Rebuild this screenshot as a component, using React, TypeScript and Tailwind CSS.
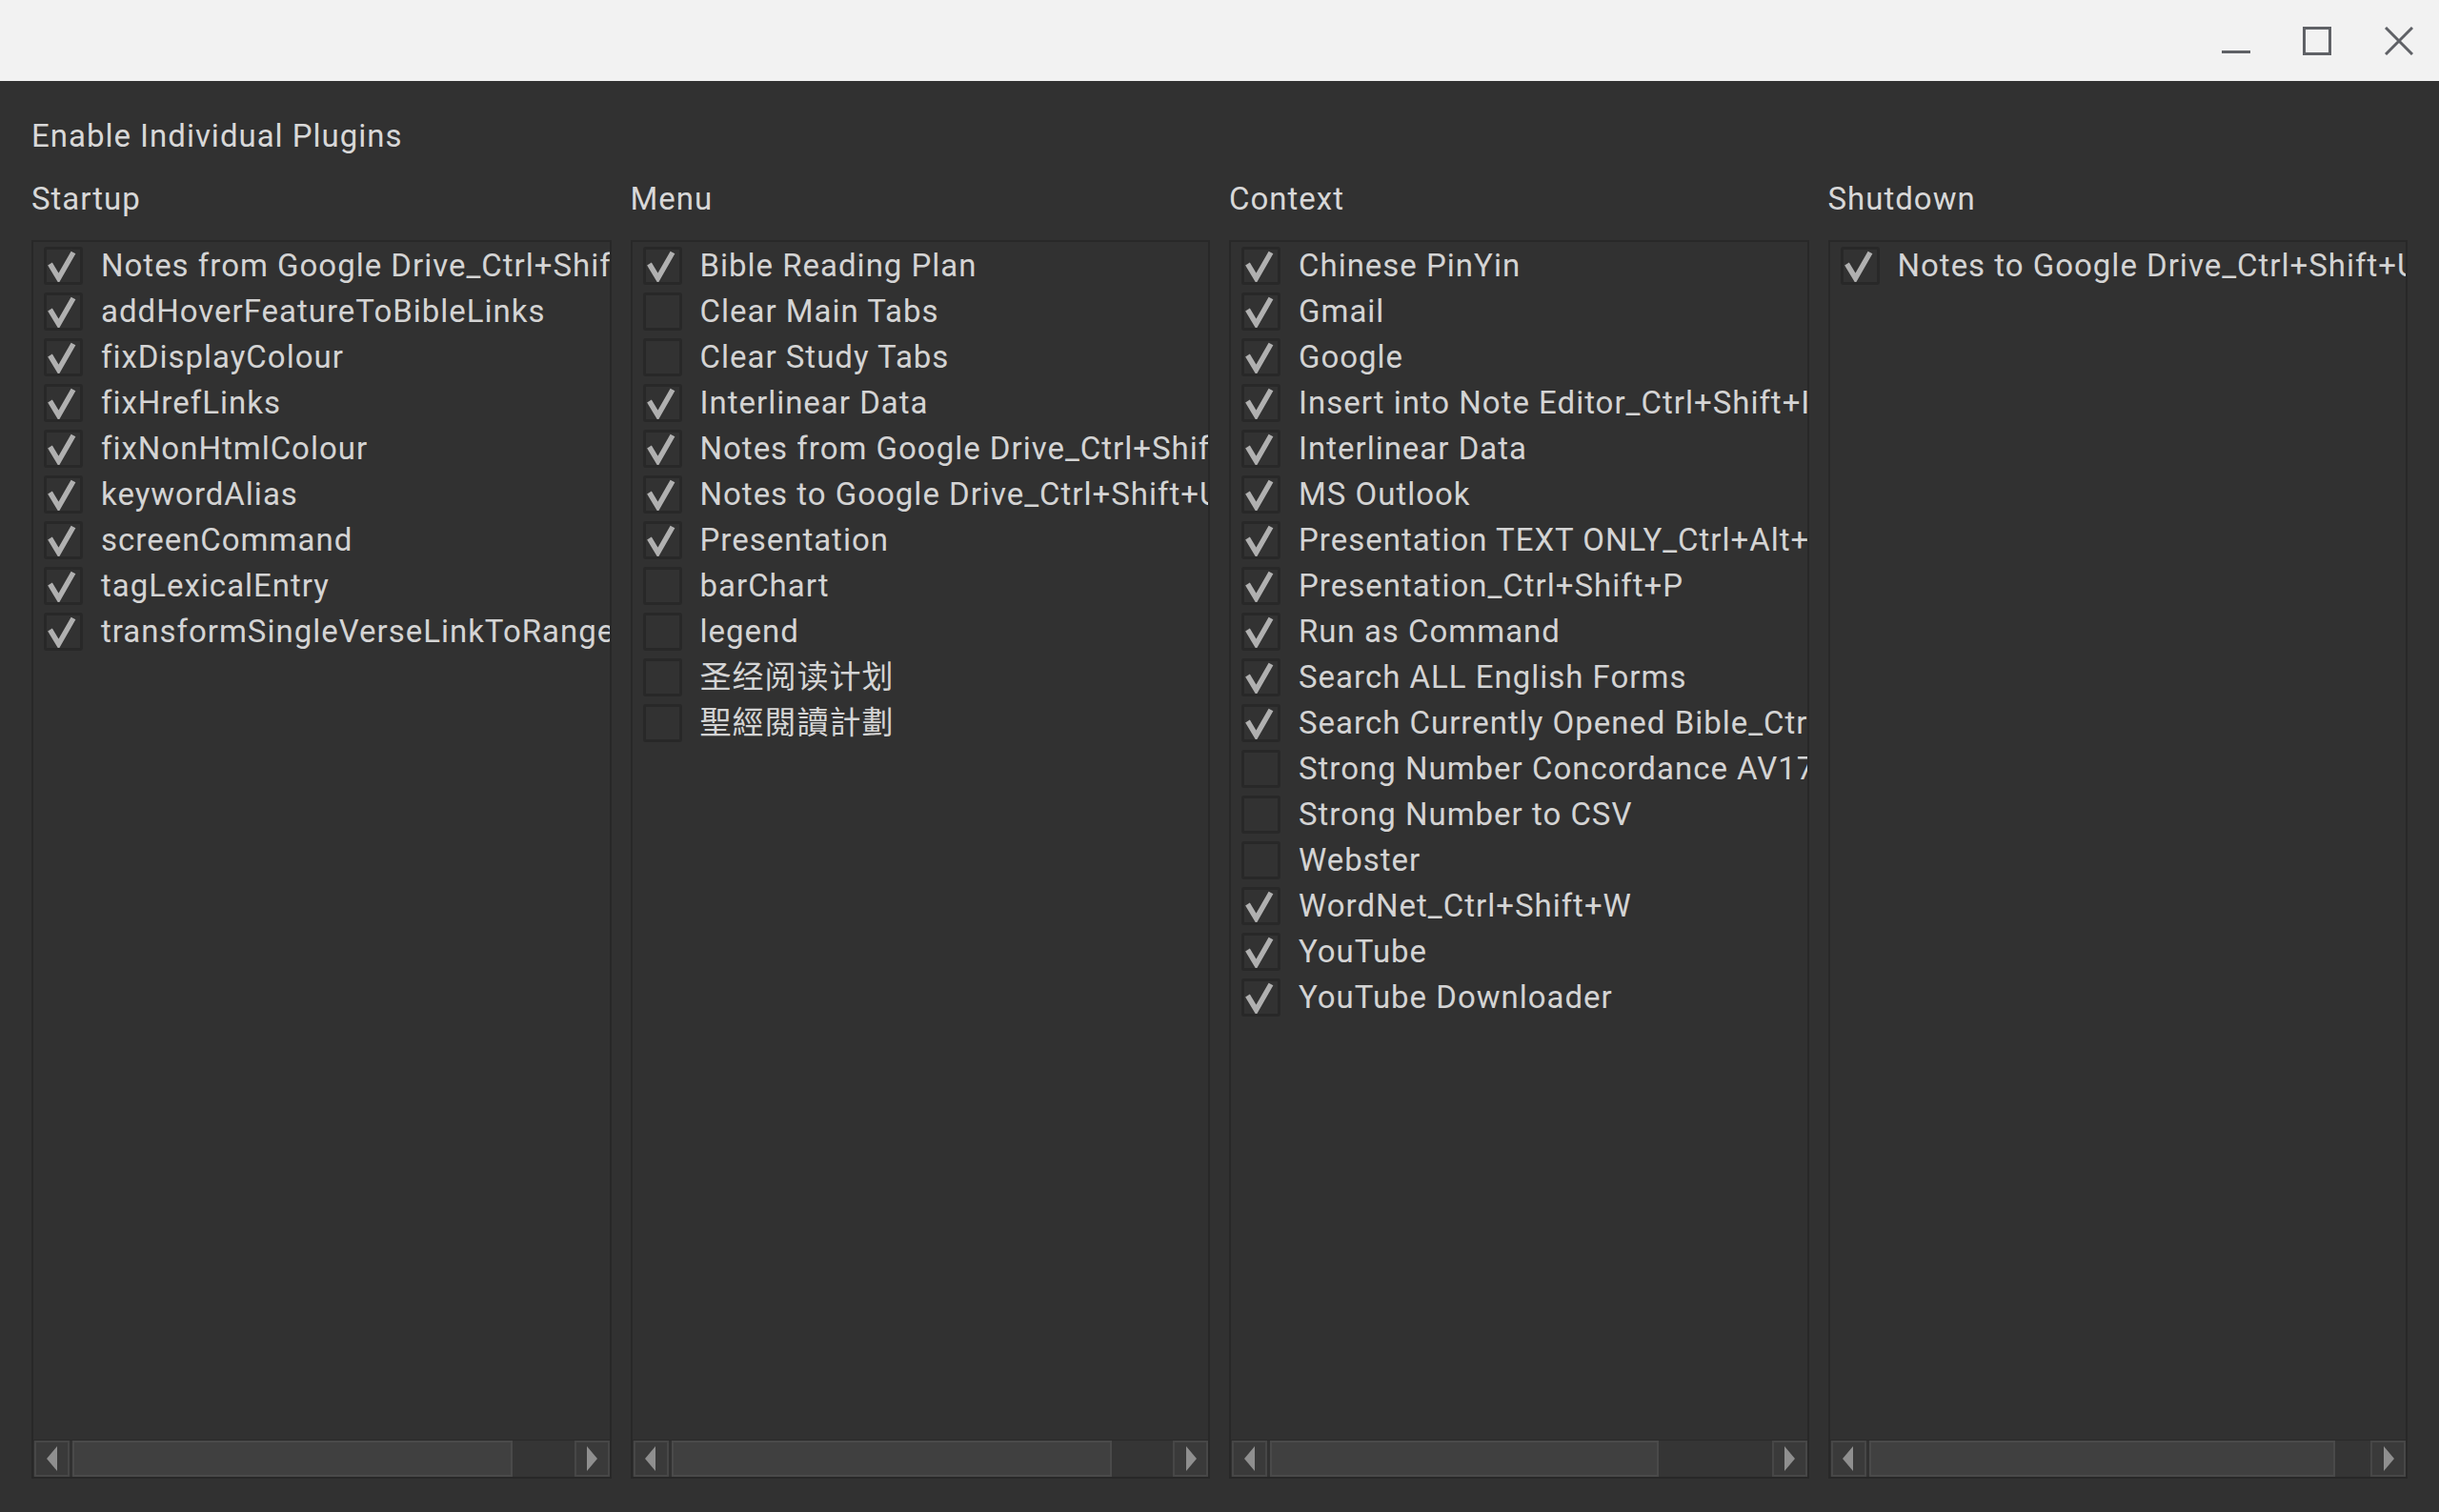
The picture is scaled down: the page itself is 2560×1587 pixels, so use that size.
import React from "react";

type Item = { label: string; on: boolean };

const STARTUP: Item[] = [
  { label: "Notes from Google Drive_Ctrl+Shift+O", on: true },
  { label: "addHoverFeatureToBibleLinks", on: true },
  { label: "fixDisplayColour", on: true },
  { label: "fixHrefLinks", on: true },
  { label: "fixNonHtmlColour", on: true },
  { label: "keywordAlias", on: true },
  { label: "screenCommand", on: true },
  { label: "tagLexicalEntry", on: true },
  { label: "transformSingleVerseLinkToRange", on: true },
];

const MENU: Item[] = [
  { label: "Bible Reading Plan", on: true },
  { label: "Clear Main Tabs", on: false },
  { label: "Clear Study Tabs", on: false },
  { label: "Interlinear Data", on: true },
  { label: "Notes from Google Drive_Ctrl+Shift+O", on: true },
  { label: "Notes to Google Drive_Ctrl+Shift+U", on: true },
  { label: "Presentation", on: true },
  { label: "barChart", on: false },
  { label: "legend", on: false },
  { label: "圣经阅读计划", on: false },
  { label: "聖經閱讀計劃", on: false },
];

const CONTEXT: Item[] = [
  { label: "Chinese PinYin", on: true },
  { label: "Gmail", on: true },
  { label: "Google", on: true },
  { label: "Insert into Note Editor_Ctrl+Shift+I", on: true },
  { label: "Interlinear Data", on: true },
  { label: "MS Outlook", on: true },
  { label: "Presentation TEXT ONLY_Ctrl+Alt+P", on: true },
  { label: "Presentation_Ctrl+Shift+P", on: true },
  { label: "Run as Command", on: true },
  { label: "Search ALL English Forms", on: true },
  { label: "Search Currently Opened Bible_Ctrl+Shift+S", on: true },
  { label: "Strong Number Concordance AV1769", on: false },
  { label: "Strong Number to CSV", on: false },
  { label: "Webster", on: false },
  { label: "WordNet_Ctrl+Shift+W", on: true },
  { label: "YouTube", on: true },
  { label: "YouTube Downloader", on: true },
];

const SHUTDOWN: Item[] = [{ label: "Notes to Google Drive_Ctrl+Shift+U", on: true }];

function Check({ on }: { on: boolean }) {
  return (
    <div className="h-[40px] w-[41px] shrink-0 rounded-[3px] border-[3px] border-[#282828] bg-[#323232]">
      {on && (
        <svg viewBox="0 0 35 34" className="h-full w-full">
          <path d="M3.5 15 L12.5 30 L28 3" fill="none" stroke="#b0b0b0" strokeWidth="5.5" strokeLinejoin="miter" />
        </svg>
      )}
    </div>
  );
}

function Arrow({ dir }: { dir: "left" | "right" }) {
  return (
    <div className="flex h-full w-[37px] shrink-0 items-center justify-center border-2 border-[#474747] bg-[#3a3a3a]">
      <svg width="12" height="26" viewBox="0 0 12 26">
        {dir === "left" ? <path d="M11 0 L11 26 L0 13 Z" fill="#8f8f8f" /> : <path d="M1 0 L1 26 L12 13 Z" fill="#8f8f8f" />}
      </svg>
    </div>
  );
}

function Column({ title, items, thumb }: { title: string; items: Item[]; thumb: string }) {
  return (
    <div className="flex min-w-0 flex-col">
      <div className="h-[48px] leading-[48px]">{title}</div>
      <div className="mt-[19px] flex min-h-0 flex-1 flex-col border-2 border-[#282828]">
        <div className="flex-1 overflow-hidden pl-[11px] pt-px">
          {items.map((it) => (
            <div key={it.label} className="flex h-[48px] items-center gap-[19px] whitespace-nowrap">
              <Check on={it.on} />
              <span className="text-[#d4d4d4]">{it.label}</span>
            </div>
          ))}
        </div>
        <div className="flex h-[39px] border-t border-[#2a2a2a] pl-px">
          <Arrow dir="left" />
          <div className={`ml-[3px] h-full border-2 border-[#4a4a4a] bg-[#404040] ${thumb}`} />
          <div className="h-full flex-1 bg-[#353535]" />
          <Arrow dir="right" />
        </div>
      </div>
    </div>
  );
}

export default function App() {
  return (
    <div
      className="flex h-[1587px] w-[2560px] flex-col overflow-hidden bg-[#313131] text-[33px] tracking-[0.03em] text-[#d8d8d8]"
      style={{ fontFamily: "Roboto, 'Noto Sans CJK SC', sans-serif" }}
    >
      <div className="flex h-[85px] shrink-0 items-start justify-end bg-[#f2f2f2] pr-[27px]">
        <svg width="30" height="30" viewBox="0 0 30 30" className="mt-[28px] mr-[55px]">
          <rect x="0" y="25" width="30" height="3" fill="#5f6166" />
        </svg>
        <svg width="30" height="30" viewBox="0 0 30 30" className="mt-[28px] mr-[56px]">
          <rect x="1.5" y="1.5" width="27" height="27" fill="none" stroke="#5f6166" strokeWidth="3" />
        </svg>
        <svg width="30" height="30" viewBox="0 0 30 30" className="mt-[28px]">
          <path d="M1 1 L29 29 M29 1 L1 29" stroke="#5f6166" strokeWidth="3" />
        </svg>
      </div>
      <div className="flex min-h-0 flex-1 flex-col px-[33px] pb-[35px] pt-[34px]">
        <div className="h-[48px] leading-[48px]">Enable Individual Plugins</div>
        <div className="mt-[18px] grid min-h-0 flex-1 grid-cols-4 gap-[20px]">
          <Column title="Startup" items={STARTUP} thumb="w-[462px]" />
          <Column title="Menu" items={MENU} thumb="w-[462px]" />
          <Column title="Context" items={CONTEXT} thumb="w-[408px]" />
          <Column title="Shutdown" items={SHUTDOWN} thumb="w-[489px]" />
        </div>
      </div>
    </div>
  );
}
